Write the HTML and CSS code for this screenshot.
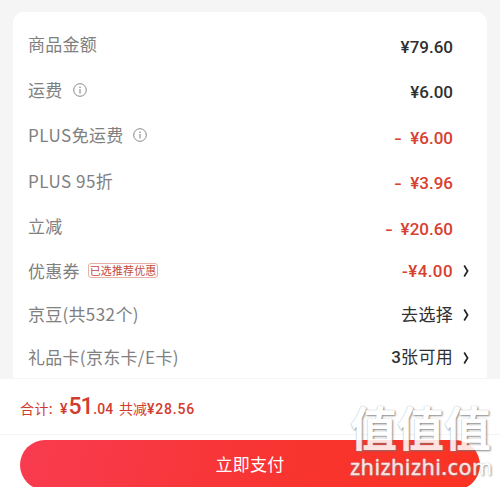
FILE: index.html
```html
<!DOCTYPE html>
<html lang="zh-CN">
<head>
<meta charset="utf-8">
<title>立即支付</title>
<link rel="stylesheet" href="styles.css">
</head>
<body>
<svg class="defs" width="0" height="0">
  <symbol id="info" viewBox="0 0 14 14"><circle cx="7" cy="7" r="6.3" fill="none" stroke="currentColor" stroke-width="1"/><circle cx="7" cy="4.2" r=".8" fill="currentColor"/><path d="M7 6v4.5" stroke="currentColor" stroke-width="1.1"/></symbol>
  <symbol id="chevron" viewBox="0 0 6 12"><path d="M1.2 .5 4.6 6 1.2 11.5" fill="none" stroke="currentColor" stroke-width="1.7"/></symbol>
</svg>
<main class="page">
  <section class="card">
    <div class="row"><span class="label">商品金额</span><span class="price">¥79.60</span></div>
    <div class="row"><span class="label">运费</span><svg class="info"><use href="#info"/></svg><span class="price">¥6.00</span></div>
    <div class="row"><span class="label"><span class="latin">PLUS</span>免运费</span><svg class="info"><use href="#info"/></svg><span class="price off"><span class="minus">-</span>¥6.00</span></div>
    <div class="row"><span class="label"><span class="latin">PLUS 95</span>折</span><span class="price off"><span class="minus">-</span>¥3.96</span></div>
    <div class="row"><span class="label">立减</span><span class="price off"><span class="minus">-</span>¥20.60</span></div>
    <div class="row link"><span class="label">优惠券</span><span class="tag">已选推荐优惠</span><span class="price off">-¥4.00</span><svg class="chevron"><use href="#chevron"/></svg></div>
    <div class="row link"><span class="label">京豆(共<span class="latin">532</span>个)</span><span class="choice">去选择</span><svg class="chevron"><use href="#chevron"/></svg></div>
    <div class="row link"><span class="label">礼品卡<span class="latin">(</span>京东卡<span class="latin">/E</span>卡)</span><span class="choice"><b>3</b>张可用</span><svg class="chevron"><use href="#chevron"/></svg></div>
  </section>
  <footer class="footer">
    <div class="total"><span class="caption">合计:</span><span class="yen">¥</span><span class="whole">51</span><span class="cents">.04</span><span class="saved">共减<b>¥28.56</b></span></div>
    <div class="action"><button class="pay">立即支付</button></div>
  </footer>
  <div class="watermark"><div class="mark">值值值</div><div class="site">zhizhizhi.com</div></div>
</main>
</body>
</html>
```
FILE: styles.css
```css
* { box-sizing: border-box; }
body { margin: 0; background: #f5f5f5; font-family: "Noto Sans CJK SC", sans-serif; }
.defs { position: absolute; }
.page { position: relative; width: 500px; height: 487px; overflow: hidden; display: flex; flex-direction: column; padding-top: 12px; }
.card { height: 366px; flex: none; overflow: hidden; margin: 0 13px; padding: 10px 16px 0 15px; background: #fff; border-radius: 11px 11px 0 0; }
.row { height: 45.5px; display: flex; align-items: center; padding-right: 18px; color: #808080; font-size: 17px; line-height: 24px; white-space: nowrap; }
.row.link { height: 43.4px; padding-right: 0; }
.label { padding-bottom: 1px; letter-spacing: .25px; }
.latin { letter-spacing: .5px; }
.info { width: 14px; height: 14px; margin-left: 10px; margin-bottom: 1px; color: #888; }
.price { margin-left: auto; padding-top: 4px; font-family: Roboto, sans-serif; font-size: 17px; font-weight: 500; color: #303030; }
.link .price { padding-top: 0; letter-spacing: .4px; }
.price.off { color: #d8402f; }
.minus { margin-right: 9px; display: inline-block; transform: scaleX(1.3); }
.tag { margin: 0 0 2px 8px; height: 15px; padding: 0 1px; border: 1px solid #e9b0a8; border-radius: 3px; color: #c54b3d; font-size: 11px; line-height: 12px; letter-spacing: .1px; }
.choice { margin-left: auto; padding-bottom: 2px; color: #303030; letter-spacing: .3px; }
.choice b { font-family: Roboto, sans-serif; font-weight: 500; }
.chevron { width: 6px; height: 12px; margin: 0 2px 0 10px; color: #222; }
.footer { height: 109px; flex: none; background: #fff; border-top: 1px solid #f5f5f5; }
.total { height: 56px; padding: 14px 0 0 20px; display: flex; align-items: baseline; color: #d23c2e; font-family: Roboto, "Noto Sans CJK SC", sans-serif; border-bottom: 1px solid #f4f4f4; line-height: 28px; white-space: nowrap; }
.caption { font-size: 14px; letter-spacing: .4px; font-family: "Noto Sans CJK SC", sans-serif; }
.yen { margin-left: 7px; font-size: 14px; font-weight: 500; }
.whole { font-size: 23px; font-weight: 500; letter-spacing: -1.2px; margin-left: 1px; }
.cents { margin-left: 1px; font-size: 14px; font-weight: 500; }
.saved { margin-left: 6px; font-size: 14px; }
.saved b { font-weight: 500; letter-spacing: .8px; }
.action { padding: 5px 20px 0; }
.pay { display: block; width: 100%; height: 50px; padding: 0 0 3px; border: 0; border-radius: 25px; background: linear-gradient(100deg, #f83b50, #f8342f 60%, #fb3322); color: #fff; font: 17px/47px "Noto Sans CJK SC", sans-serif; letter-spacing: .3px; }
.watermark { position: absolute; left: 350px; top: 400px; width: 150px; color: #fff; opacity: .86; white-space: nowrap; text-shadow: 1px 1px 2px #777, 0 0 1px #aaa; }
.mark { height: 56px; font-size: 47px; line-height: 52px; font-weight: 600; }
.site { height: 22px; font: 400 21.5px/22px "Noto Sans", sans-serif; letter-spacing: .5px; -webkit-text-stroke: .3px #fff; }
```
